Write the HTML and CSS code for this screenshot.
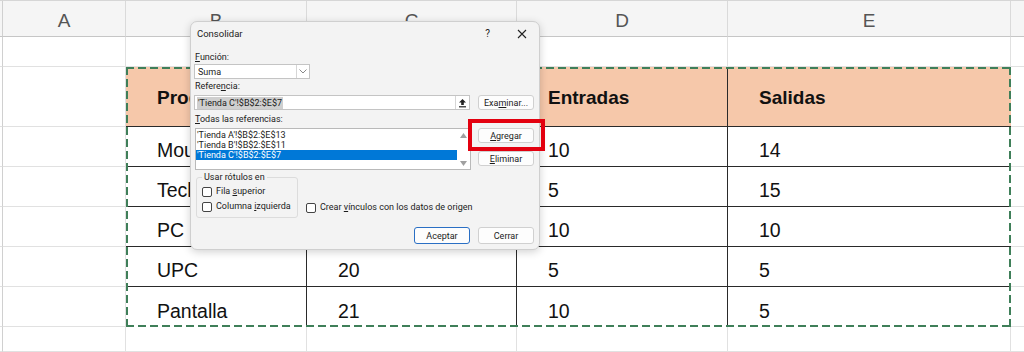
FILE: index.html
```html
<!DOCTYPE html>
<html lang="es">
  <head>
    <meta charset="UTF-8" />
    <meta name="viewport" content="width=device-width, initial-scale=1.0" />
    <title>Consolidar</title>
    <link rel="stylesheet" href="styles.css">
  </head>
  <body>
    <div class="sheet">
      <!-- column headers -->
      <div class="hd gutter"></div>
      <div class="hd">A</div>
      <div class="hd">B</div>
      <div class="hd">C</div>
      <div class="hd">D</div>
      <div class="hd">E</div>
      <div class="hd last"></div>

      <!-- row 1 -->
      <div class="cell gutter"></div>
      <div class="cell"></div>
      <div class="cell"></div>
      <div class="cell"></div>
      <div class="cell"></div>
      <div class="cell"></div>
      <div class="cell last"></div>

      <!-- data block over B2:E7 -->
      <div class="data">
        <div class="th">Producto</div>
        <div class="th">Cantidad</div>
        <div class="th">Entradas</div>
        <div class="th">Salidas</div>

        <div class="td">Mouse</div>
        <div class="td">12</div>
        <div class="td">10</div>
        <div class="td">14</div>

        <div class="td">Teclado</div>
        <div class="td">18</div>
        <div class="td">5</div>
        <div class="td">15</div>

        <div class="td">PC</div>
        <div class="td">15</div>
        <div class="td">10</div>
        <div class="td">10</div>

        <div class="td">UPC</div>
        <div class="td">20</div>
        <div class="td">5</div>
        <div class="td">5</div>

        <div class="td">Pantalla</div>
        <div class="td">21</div>
        <div class="td">10</div>
        <div class="td">5</div>
      </div>

      <div class="cell gutter"></div><div class="cell"></div><div class="cell last"></div>
      <div class="cell gutter"></div><div class="cell"></div><div class="cell last"></div>
      <div class="cell gutter"></div><div class="cell"></div><div class="cell last"></div>
      <div class="cell gutter"></div><div class="cell"></div><div class="cell last"></div>
      <div class="cell gutter"></div><div class="cell"></div><div class="cell last"></div>
      <div class="cell gutter"></div><div class="cell"></div><div class="cell last"></div>

      <!-- row 8 -->
      <div class="cell gutter"></div>
      <div class="cell"></div>
      <div class="cell"></div>
      <div class="cell"></div>
      <div class="cell"></div>
      <div class="cell"></div>
      <div class="cell last"></div>
    </div>

    <div class="dialog">
      <div class="dlg-title">
        <span>Consolidar</span>
        <span class="dlg-ctrls">
          <span class="help">?</span>
          <svg width="10" height="10" viewBox="0 0 10 10">
            <path d="M1 1 L9 9 M9 1 L1 9" stroke="#222" stroke-width="1.1" fill="none" />
          </svg>
        </span>
      </div>

      <div class="dlg-body">
        <div class="lbl"><u>F</u>unción:</div>
        <div class="select">
          <span class="select-val">Suma</span>
          <span class="drop">
            <svg width="8" height="5" viewBox="0 0 8 5">
              <path d="M0.5 0.5 L4 4 L7.5 0.5" stroke="#888" stroke-width="1" fill="none" />
            </svg>
          </span>
        </div>

        <div class="lbl lbl-ref">Refere<u>n</u>cia:</div>
        <div class="row">
          <div class="ref-input">
            <span class="sel-text">'Tienda C'!$B$2:$E$7</span>
            <span class="collapse">
              <svg width="9" height="10" viewBox="0 0 9 10">
                <path d="M4.5 1 L1 4.5 H3.2 V7 H5.8 V4.5 H8 Z" fill="#222" />
                <rect x="1" y="8.2" width="7" height="1.2" fill="#222" />
              </svg>
            </span>
          </div>
          <button class="btn">Exa<u>m</u>inar...</button>
        </div>

        <div class="lbl lbl-all"><u>T</u>odas las referencias:</div>
        <div class="row">
          <div class="list">
            <div class="items">
              <div class="item">'Tienda A'!$B$2:$E$13</div>
              <div class="item">'Tienda B'!$B$2:$E$11</div>
              <div class="item selected">'Tienda C'!$B$2:$E$7</div>
            </div>
            <div class="scroll">
              <svg width="7" height="5" viewBox="0 0 7 5"><path d="M3.5 0 L7 5 H0 Z" fill="#a0a0a0" /></svg>
              <svg width="7" height="5" viewBox="0 0 7 5"><path d="M0 0 H7 L3.5 5 Z" fill="#a0a0a0" /></svg>
            </div>
          </div>
          <div class="side-btns">
            <button class="btn"><u>A</u>gregar</button>
            <button class="btn"><u>E</u>liminar</button>
          </div>
        </div>

        <div class="row options">
          <fieldset class="group">
            <legend>Usar rótulos en</legend>
            <div class="check"><span class="box"></span><span>Fila <u>s</u>uperior</span></div>
            <div class="check"><span class="box"></span><span>Columna <u>i</u>zquierda</span></div>
          </fieldset>
          <div class="check link-check"><span class="box"></span><span>Crear <u>v</u>ínculos con los datos de origen</span></div>
        </div>

        <div class="footer">
          <button class="btn primary">Aceptar</button>
          <button class="btn">Cerrar</button>
        </div>
      </div>

      <div class="mark"></div>
    </div>
  </body>
</html>
```

FILE: styles.css
```css
* {
  margin: 0;
  padding: 0;
  box-sizing: border-box;
}

body {
  font-family: "Liberation Sans", Arial, sans-serif;
  background: #fff;
  width: 1024px;
  height: 352px;
  overflow: hidden;
  position: relative;
}

/* ---------- sheet ---------- */

.sheet {
  display: grid;
  grid-template-columns: 3px 123px 181px 210px 211px 283px 1fr;
  grid-template-rows: 36px 30px 60px 40px 40px 40px 40px 40px 1fr;
  height: 352px;
  border-top: 1px solid #d6d6d6;
}

.hd {
  background: #f5f5f5;
  border-right: 1px solid #dadada;
  border-bottom: 1px solid #c6c6c6;
  color: #555;
  font-size: 19px;
  text-align: center;
  padding-top: 10px;
  line-height: 20px;
}

.cell {
  border-right: 1px solid #e1e1e1;
  border-bottom: 1px solid #e1e1e1;
}

.gutter {
  border-right-color: #d0d0d0;
}

.last {
  border-right: none;
}

.data {
  grid-column: 3 / 7;
  grid-row: 3 / 9;
  display: grid;
  grid-template-columns: 181px 210px 211px 1fr;
  grid-template-rows: 60px repeat(5, 40px);
  position: relative;
  color: #111;
}

.data::after {
  content: "";
  position: absolute;
  inset: 0;
  pointer-events: none;
  background:
    repeating-linear-gradient(90deg, #3f7f59 0 8px, transparent 8px 12px) top left / 100% 2px no-repeat,
    repeating-linear-gradient(90deg, #3f7f59 0 8px, transparent 8px 12px) bottom left / 100% 2px no-repeat,
    repeating-linear-gradient(180deg, #3f7f59 0 8px, transparent 8px 12px) top left / 2px 100% no-repeat,
    repeating-linear-gradient(180deg, #3f7f59 0 8px, transparent 8px 12px) top right / 2px 100% no-repeat;
}

.th,
.td {
  border-right: 1px solid #2a2a2a;
  border-bottom: 1px solid #2a2a2a;
  padding-left: 31px;
  font-size: 19.5px;
  display: flex;
}

.th:nth-child(4n),
.td:nth-child(4n) {
  border-right: none;
}

.td:nth-last-child(-n + 4) {
  border-bottom: none;
}

.th {
  background: #f6c8aa;
  font-weight: bold;
  font-size: 19px;
  align-items: center;
  padding-top: 3px;
}

.td {
  align-items: flex-end;
  padding-bottom: 4px;
}

/* ---------- dialog ---------- */

.dialog {
  position: absolute;
  left: 190px;
  top: 21px;
  width: 350px;
  height: 229px;
  background: #f3f3f3;
  border: 1px solid #cfcfcf;
  border-radius: 7px;
  box-shadow: 0 2px 8px rgba(0, 0, 0, 0.18);
  font-family: Roboto, "Noto Sans", sans-serif;
  font-size: 9px;
  color: #1b1b1b;
}

.dlg-title {
  height: 23px;
  display: flex;
  align-items: center;
  justify-content: space-between;
  padding: 0 12px 0 6px;
  font-size: 9.5px;
}

.dlg-ctrls {
  display: flex;
  align-items: center;
  gap: 27px;
}

.help {
  font-size: 10px;
}

.dlg-body {
  padding: 6px 5px 0 3px;
}

.lbl {
  line-height: 13px;
  padding-left: 1px;
}

.lbl-ref {
  margin-top: 1px;
}

.lbl-all {
  margin-top: 3px;
}

.row {
  display: flex;
  gap: 8px;
}

.select {
  width: 116px;
  height: 15px;
  background: #fff;
  border: 1px solid #c4c4c4;
  display: flex;
  justify-content: space-between;
  align-items: center;
}

.select-val {
  padding-left: 3px;
}

.drop {
  width: 13px;
  height: 100%;
  border-left: 1px solid #d6d6d6;
  display: flex;
  align-items: center;
  justify-content: center;
}

.ref-input {
  margin-top: 2px;
  width: 276px;
  height: 15px;
  background: #fff;
  border: 1px solid #c4c4c4;
  display: flex;
  justify-content: space-between;
  align-items: center;
}

.sel-text {
  background: #cfcfcf;
  margin-left: 2px;
  padding: 0 1px;
  line-height: 12px;
}

.collapse {
  width: 14px;
  height: 100%;
  border-left: 1px solid #d6d6d6;
  display: flex;
  align-items: center;
  justify-content: center;
}

.btn {
  width: 56px;
  height: 15px;
  background: #fdfdfd;
  border: 1px solid #d0d0d0;
  border-radius: 3px;
  font-family: inherit;
  font-size: 9px;
  color: #1b1b1b;
}

.row > .btn {
  margin-top: 2px;
}

.list {
  margin-top: 2px;
  margin-left: 1px;
  width: 276px;
  height: 42px;
  background: #fff;
  border: 1px solid #b9b9b9;
  display: flex;
}

.items {
  flex: 1;
  padding-top: 1px;
}

.item {
  line-height: 10px;
  padding-left: 1px;
}

.item.selected {
  background: #0078d7;
  color: #fff;
}

.scroll {
  width: 13px;
  display: flex;
  flex-direction: column;
  justify-content: space-between;
  align-items: center;
  padding: 4px 0 3px;
}

.side-btns {
  display: flex;
  flex-direction: column;
  gap: 8px;
  margin-top: 2px;
  margin-left: -1px;
}

.options {
  margin-top: 1px;
  align-items: flex-end;
}

.group {
  width: 102px;
  margin-left: 2px;
  border: 1px solid #dcdcdc;
  border-radius: 3px;
  padding: 0 0 3px 5px;
}

.group legend {
  padding: 0 2px;
  margin-left: 0;
  line-height: 13px;
}

.check {
  display: flex;
  align-items: center;
  gap: 4px;
  line-height: 15px;
}

.box {
  width: 10px;
  height: 10px;
  background: #fff;
  border: 1px solid #444;
  border-radius: 2px;
}

.link-check {
  margin-left: 0;
  margin-bottom: 3px;
}

.footer {
  display: flex;
  justify-content: flex-end;
  gap: 8px;
  margin-top: 9px;
}

.footer .btn {
  height: 17px;
}

.primary {
  border-color: #2a6fc4;
}

/* red annotation box round "Agregar" */
.mark {
  position: absolute;
  left: 277px;
  top: 97px;
  width: 77px;
  height: 32px;
  border: 4px solid #e3000f;
}
```
